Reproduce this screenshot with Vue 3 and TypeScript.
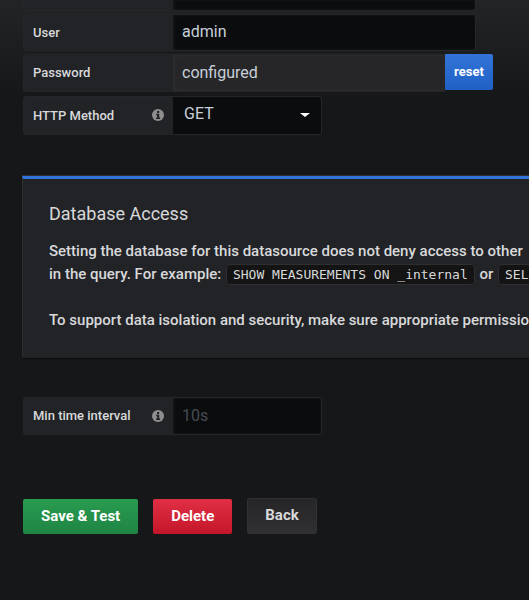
<script setup lang="ts">
import { ref } from 'vue'

const database = ref('')
const user = ref('admin')
const password = ref('configured')
const method = ref('GET')
const minInterval = ref('')

const methods: string[] = ['GET', 'POST']
</script>

<template>
  <main class="page">
    <form class="settings" @submit.prevent>
      <div class="row row-clipped">
        <label class="label" for="database" aria-label="Database"></label>
        <input id="database" v-model="database" class="input input-wide" type="text" />
      </div>
      <div class="row">
        <label class="label" for="user">User</label>
        <input id="user" v-model="user" class="input input-wide" type="text" />
      </div>
      <div class="row row-password">
        <label class="label" for="password">Password</label>
        <input id="password" v-model="password" class="input input-configured" type="text" disabled />
        <button class="reset" type="button">reset</button>
      </div>
      <div class="row row-method">
        <label class="label" for="method">
          HTTP Method
          <svg class="info" viewBox="0 0 12 12" aria-hidden="true">
            <circle cx="6" cy="6" r="6" />
            <path d="M4.2 4.8h3v3.8h.9v1.4H4.1V8.6h1V6.2h-.9zM5 1.9h2.2v2H5z" />
          </svg>
        </label>
        <div class="select-wrap">
          <select id="method" v-model="method" class="input select">
            <option v-for="m in methods" :key="m" :value="m">{{ m }}</option>
          </select>
        </div>
      </div>

      <section class="card">
        <h2 class="card-title">Database Access</h2>
        <p class="card-text">
          Setting the database for this datasource does not deny access to other<br />
          in the query. For example: <code>SHOW MEASUREMENTS ON _internal</code> or <code>SELECT</code><br /><br />
          To support data isolation and security, make sure appropriate permissions
        </p>
      </section>

      <div class="row row-interval">
        <label class="label" for="interval">
          Min time interval
          <svg class="info" viewBox="0 0 12 12" aria-hidden="true">
            <circle cx="6" cy="6" r="6" />
            <path d="M4.2 4.8h3v3.8h.9v1.4H4.1V8.6h1V6.2h-.9zM5 1.9h2.2v2H5z" />
          </svg>
        </label>
        <input id="interval" v-model="minInterval" class="input input-short" type="text" placeholder="10s" />
      </div>

      <div class="actions">
        <button class="btn btn-save" type="submit">Save &amp; Test</button>
        <button class="btn btn-delete" type="button">Delete</button>
        <a class="btn btn-back" href="#">Back</a>
      </div>
    </form>
  </main>
</template>

<style>
body {
  background: #161719;
}
</style>

<style scoped>
.page {
  box-sizing: border-box;
  min-height: 100vh;
  overflow: hidden;
  padding: 0 0 64px 23px;
  background: linear-gradient(180deg, #222426 0, #161719 96px);
  color: #d8d9da;
  font: 500 15px/23px Roboto, sans-serif;
}

.page * {
  box-sizing: border-box;
}

.row {
  display: flex;
  height: 37px;
  margin-bottom: 3px;
}

.row-clipped {
  height: 11px;
}

.row-clipped .label,
.row-clipped .input {
  border-top: 0;
  border-top-left-radius: 0;
  border-top-right-radius: 0;
}

.row-password {
  height: 38px;
  margin-bottom: 4px;
}

.row-method {
  height: 39px;
  margin-bottom: 41px;
}

.row-interval {
  height: 38px;
  margin-bottom: 63px;
}

.label {
  display: flex;
  flex: none;
  align-items: center;
  justify-content: space-between;
  width: 150px;
  padding: 0 9px 1px;
  border: 1px solid #262628;
  border-right: 0;
  border-radius: 3px 0 0 3px;
  background: #222327;
  font-size: 13px;
}

.info {
  width: 12px;
  height: 12px;
  fill: #8e8e8e;
}

.info path {
  fill: #222327;
}

.input {
  min-width: 0;
  margin: 0;
  padding: 0 9px 2px;
  border: 1px solid #262628;
  border-left: 0;
  border-radius: 0 3px 3px 0;
  outline: 0;
  background: #0b0c0e;
  box-shadow: inset 1px 0 4px 0 rgba(150, 150, 150, 0.1);
  color: #c7d0d9;
  font: 16px/23px Roboto, sans-serif;
}

.input::placeholder {
  color: #464c54;
  opacity: 1;
}

.input-wide {
  width: 303px;
}

.input-configured {
  width: 272px;
  border-radius: 0;
  background: #262628;
}

.input-short {
  width: 149px;
}

.select-wrap {
  position: relative;
  width: 149px;
}

.select-wrap::after {
  position: absolute;
  top: 17px;
  right: 12px;
  border: 5px solid transparent;
  border-top: 4px solid #fff;
  border-bottom: 0;
  content: '';
  pointer-events: none;
}

.select {
  width: 100%;
  height: 100%;
  padding: 0 11px 4px;
  appearance: none;
  box-shadow: none;
}

.reset {
  width: 48px;
  height: 36px;
  padding: 0;
  border: 0;
  border-radius: 0 2px 2px 0;
  background: linear-gradient(180deg, #3274d9, #1f60c4);
  color: #fff;
  font: 700 13px/20px Roboto, sans-serif;
}

.card {
  margin: 0 0 39px -1px;
  padding: 23px 26px 26px;
  border-top: 3px solid #3274d9;
  border-left: 1px solid #2f3033;
  border-radius: 0 0 0 3px;
  background: #222327;
  box-shadow: 0 -1px 0 #2f3033, 0 1px 1px #0b0c0e;
  white-space: nowrap;
}

.card-title {
  margin: 0 0 14px;
  font-size: 18px;
  font-weight: 400;
  line-height: 24px;
}

.card-text {
  margin: 0;
}

code {
  margin: 0 1px;
  padding: 2px 6px;
  border: 1px solid #2f2f32;
  border-radius: 4px;
  background: #141414;
  font: 13px/15px "DejaVu Sans Mono", monospace;
}

.actions {
  display: flex;
  align-items: flex-end;
  gap: 15px;
}

.btn {
  height: 35px;
  padding: 0 18px;
  border: 0;
  border-radius: 2px;
  color: #fff;
  font: 700 15px/33px Roboto, sans-serif;
  text-decoration: none;
}

.btn-save {
  background: linear-gradient(180deg, #299c50, #1f8444);
}

.btn-delete {
  background: linear-gradient(180deg, #e02f44, #c4162a);
}

.btn-back {
  height: 36px;
  padding: 0 17px;
  border: 1px solid #303133;
  background: linear-gradient(180deg, #262628, #303032);
  color: #d8d9da;
}
</style>
